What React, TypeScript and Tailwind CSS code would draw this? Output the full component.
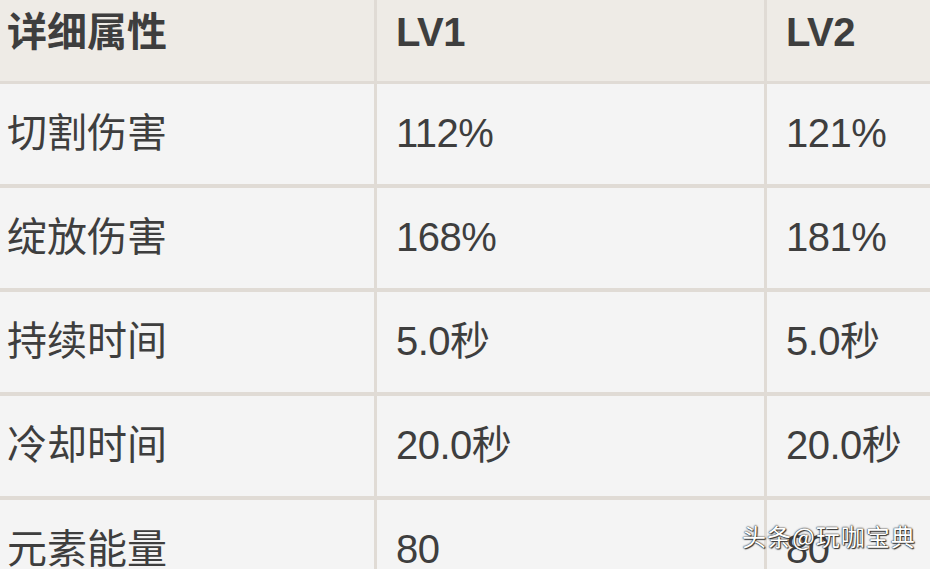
import React from "react";

const rows: [string, string, string][] = [
  ["切割伤害", "112%", "121%"],
  ["绽放伤害", "168%", "181%"],
  ["持续时间", "5.0秒", "5.0秒"],
  ["冷却时间", "20.0秒", "20.0秒"],
  ["元素能量", "80", "80"],
];

export default function App() {
  return (
    <div className="relative w-[930px] h-[569px] overflow-hidden bg-[#f4f4f4] font-['Liberation_Sans','Noto_Sans_CJK_SC',sans-serif] text-[#3e3e3e]">
      <div className="flex flex-col">
        <div className="grid grid-cols-[377px_390px_1fr] h-[84px] bg-[#eeebe6] border-b-[3px] border-[#e0dbd5] font-bold text-[40px] leading-none">
          <div className="flex items-center pl-[7px] pb-[18px] border-r-[3px] border-[#e0dbd5]">详细属性</div>
          <div className="flex items-center pl-[19px] pb-[18px] border-r-[3px] border-[#e0dbd5] tracking-[-0.5px]">LV1</div>
          <div className="flex items-center pl-[19px] pb-[18px] tracking-[-0.5px]">LV2</div>
        </div>
        {rows.map((r) => (
          <div
            key={r[0]}
            className="grid grid-cols-[377px_390px_1fr] h-[104px] border-b-4 border-[#e0dbd5] text-[40px] leading-none"
          >
            <div className="flex items-center pl-[7px] pb-[3px] border-r-[3px] border-[#e0dbd5]">{r[0]}</div>
            <div className="flex items-center pl-[19px] pb-[3px] border-r-[3px] border-[#e0dbd5] tracking-[-0.5px]">{r[1]}</div>
            <div className="flex items-center pl-[19px] pb-[3px] tracking-[-0.5px]">{r[2]}</div>
          </div>
        ))}
      </div>
      <div className="absolute left-[742px] top-[524px] text-[24px] tracking-[1px] leading-none text-white font-['Noto_Sans_CJK_SC',sans-serif] [text-shadow:0_0_1px_#222,0_0_2px_#333,1px_1px_1px_#333]">
        头条@玩咖宝典
      </div>
    </div>
  );
}
